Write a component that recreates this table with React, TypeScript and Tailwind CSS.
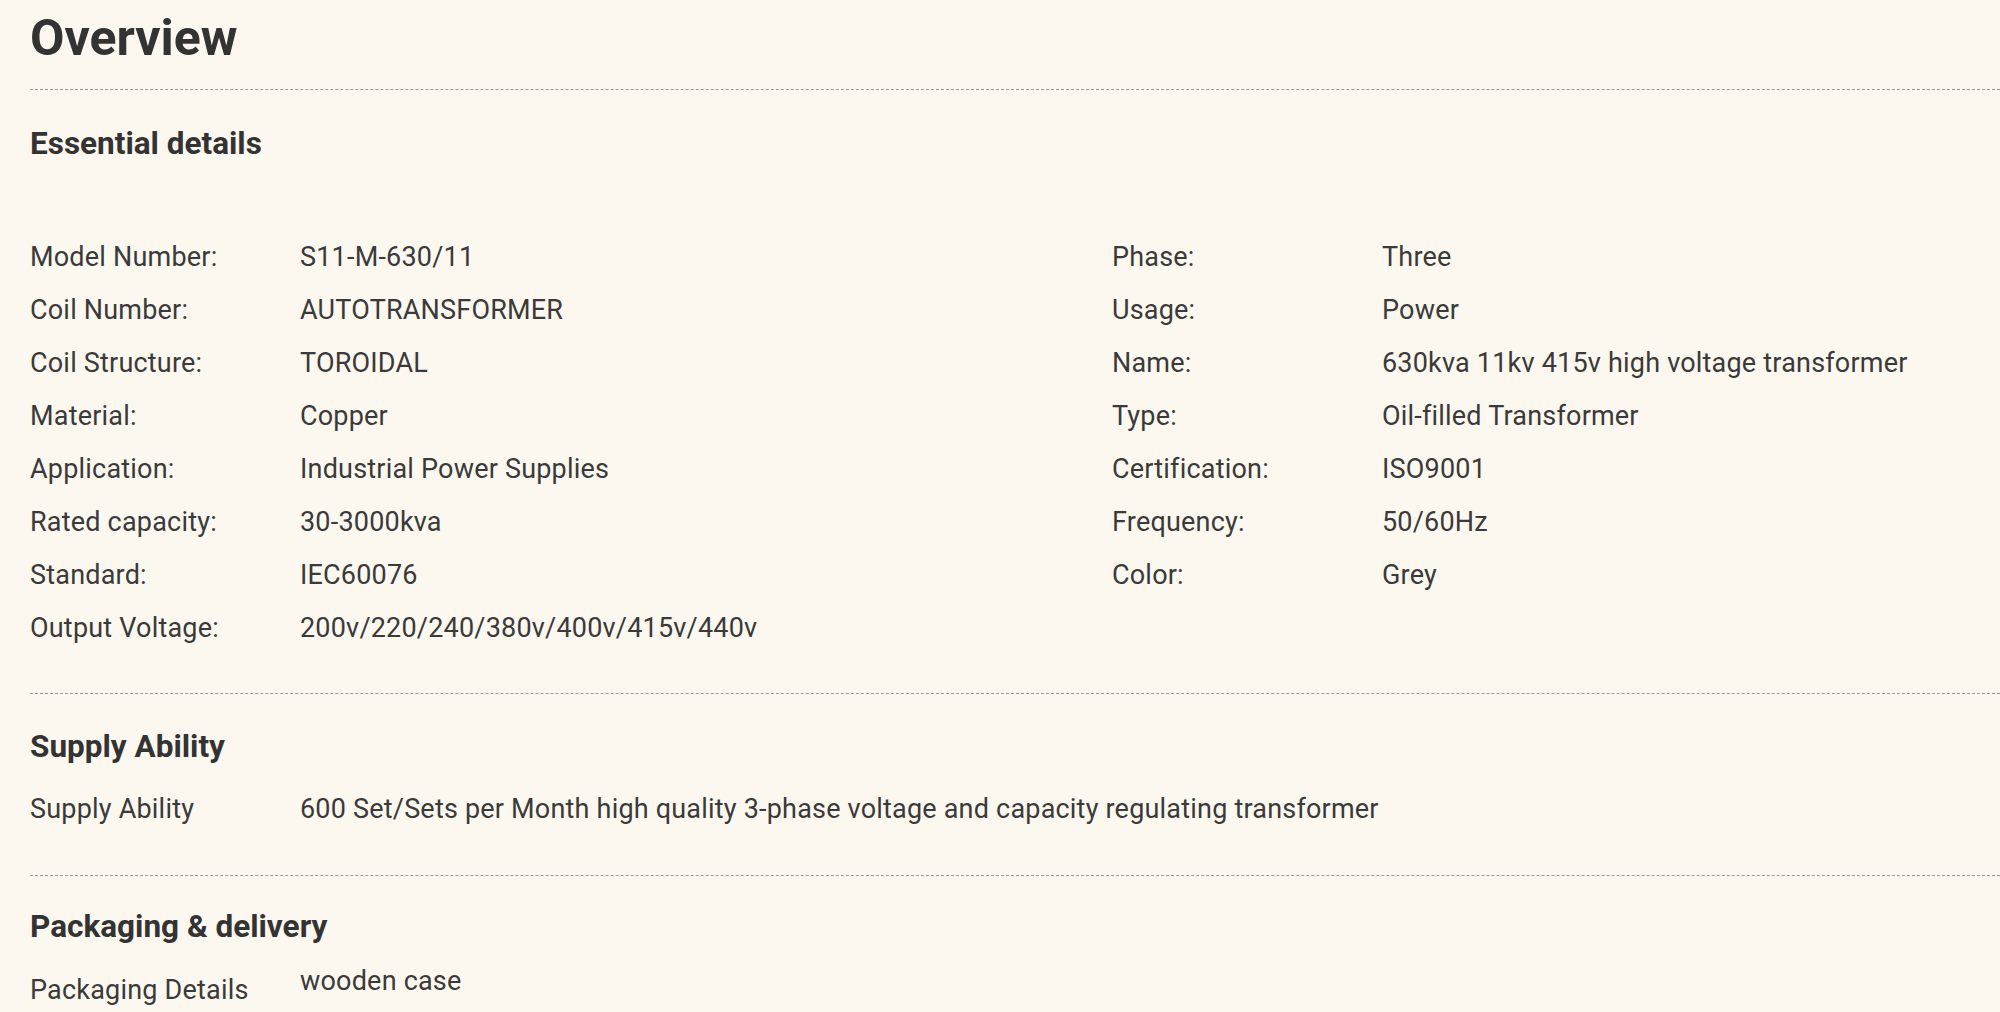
import React from 'react';

const leftSpecs: [string, string][] = [
  ['Model Number:', 'S11-M-630/11'],
  ['Coil Number:', 'AUTOTRANSFORMER'],
  ['Coil Structure:', 'TOROIDAL'],
  ['Material:', 'Copper'],
  ['Application:', 'Industrial Power Supplies'],
  ['Rated capacity:', '30-3000kva'],
  ['Standard:', 'IEC60076'],
  ['Output Voltage:', '200v/220/240/380v/400v/415v/440v'],
];

const rightSpecs: [string, string][] = [
  ['Phase:', 'Three'],
  ['Usage:', 'Power'],
  ['Name:', '630kva 11kv 415v high voltage transformer'],
  ['Type:', 'Oil-filled Transformer'],
  ['Certification:', 'ISO9001'],
  ['Frequency:', '50/60Hz'],
  ['Color:', 'Grey'],
];

// one label / value line of the spec table
const SpecRow = ({ label, value }: { label: string; value: string }) => (
  <div className="flex text-[27px] leading-[53px] tracking-[0.2px] text-[#3a3a3a]">
    <div className="w-[270px] shrink-0">{label}</div>
    <div className="whitespace-nowrap">{value}</div>
  </div>
);

const Divider = ({ className }: { className: string }) => (
  <div className={`border-t border-dashed border-[#9a9a9a] ${className}`} />
);

function App() {
  return (
    <div className="min-h-screen overflow-hidden bg-[#fdf8ef] pl-[30px] font-['Roboto','Liberation_Sans',sans-serif] text-[#333]">
      <h1 className="pt-[9px] text-[50px] font-bold leading-[58px]">Overview</h1>
      <Divider className="mt-[22px]" />

      <h2 className="mt-[37px] text-[31.5px] font-bold leading-[34px]">Essential details</h2>
      <div className="mt-[70px] flex">
        <div className="w-[1082px] shrink-0">
          {leftSpecs.map(([l, v]) => (
            <SpecRow key={l} label={l} value={v} />
          ))}
        </div>
        <div className="flex-1">
          {rightSpecs.map(([l, v]) => (
            <SpecRow key={l} label={l} value={v} />
          ))}
        </div>
      </div>

      <Divider className="mt-[38px]" />
      <h2 className="mt-[36px] text-[31.5px] font-bold leading-[34px]">Supply Ability</h2>
      <div className="mt-[19px]">
        <SpecRow
          label="Supply Ability"
          value="600 Set/Sets per Month high quality 3-phase voltage and capacity regulating transformer"
        />
      </div>

      <Divider className="mt-[39px]" />
      <h2 className="mt-[34px] text-[31.5px] font-bold leading-[34px]">Packaging &amp; delivery</h2>
      <div className="mt-[20px] flex items-start text-[27px] tracking-[0.2px] text-[#3a3a3a]">
        <div className="w-[270px] shrink-0 leading-[53px]">Packaging Details</div>
        <div className="leading-[35px]">wooden case</div>
      </div>
      <div className="h-[60px]" />
    </div>
  );
}

export default App;
